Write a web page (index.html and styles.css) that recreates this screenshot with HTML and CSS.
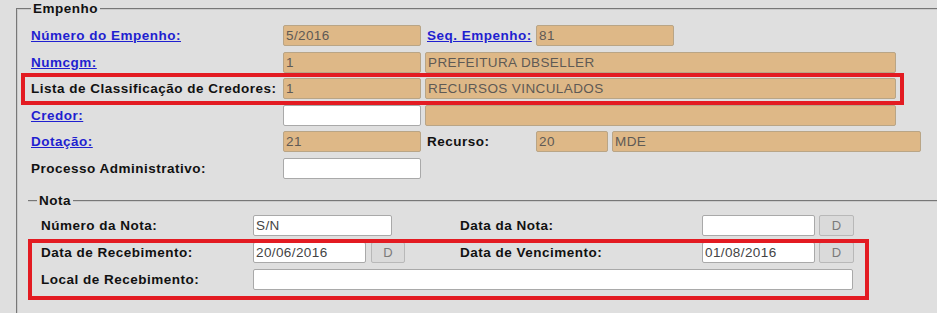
FILE: index.html
```html
<!DOCTYPE html>
<html lang="pt-BR">
<head>
    <meta charset="UTF-8">
    <title>Empenho</title>
    <link rel="stylesheet" href="styles.css">
</head>
<body>

<fieldset class="box">
    <legend>Empenho</legend>

    <div class="row">
        <span class="lbl lbl-main"><a href="#">Número do Empenho:</a></span>
        <input class="ro w-code" type="text" value="5/2016" readonly>
        <span class="lbl lbl-side"><a href="#">Seq. Empenho:</a></span>
        <input class="ro w-code" type="text" value="81" readonly>
    </div>
    <div class="row">
        <span class="lbl lbl-main"><a href="#">Numcgm:</a></span>
        <input class="ro w-code" type="text" value="1" readonly>
        <input class="ro w-desc" type="text" value="PREFEITURA DBSELLER" readonly>
    </div>
    <div class="row">
        <span class="lbl lbl-main">Lista de Classificação de Credores:</span>
        <input class="ro w-code" type="text" value="1" readonly>
        <input class="ro w-desc" type="text" value="RECURSOS VINCULADOS" readonly>
    </div>
    <div class="row">
        <span class="lbl lbl-main"><a href="#">Credor:</a></span>
        <input class="w-code" type="text" value="">
        <input class="ro w-desc" type="text" value="" readonly>
    </div>
    <div class="row">
        <span class="lbl lbl-main"><a href="#">Dotação:</a></span>
        <input class="ro w-code" type="text" value="21" readonly>
        <span class="lbl lbl-side">Recurso:</span>
        <input class="ro w-small" type="text" value="20" readonly>
        <input class="ro w-rec" type="text" value="MDE" readonly>
    </div>
    <div class="row">
        <span class="lbl lbl-main">Processo Administrativo:</span>
        <input class="w-code" type="text" value="">
    </div>

    <fieldset class="separator">
        <legend>Nota</legend>
        <div class="nota-grid">
            <span class="lbl">Número da Nota:</span>
            <div class="cell"><input class="w-nota" type="text" value="S/N"></div>
            <span class="lbl">Data da Nota:</span>
            <div class="cell">
                <input class="w-date" type="text" value="">
                <button class="btn-date" type="button">D</button>
            </div>

            <span class="lbl">Data de Recebimento:</span>
            <div class="cell">
                <input class="w-date" type="text" value="20/06/2016">
                <button class="btn-date btn-first" type="button">D</button>
            </div>
            <span class="lbl">Data de Vencimento:</span>
            <div class="cell">
                <input class="w-date" type="text" value="01/08/2016">
                <button class="btn-date" type="button">D</button>
            </div>

            <span class="lbl">Local de Recebimento:</span>
            <div class="cell span-3"><input class="w-local" type="text" value=""></div>
        </div>
    </fieldset>
</fieldset>

<!-- marcações em vermelho sobre o formulário -->
<div class="mark mark-lista"></div>
<div class="mark mark-receb"></div>

</body>
</html>
```

FILE: styles.css
```css
body {
    margin: 0;
    background-color: #dfdfdf;
    font-family: "Liberation Sans", Arial, sans-serif;
    font-size: 13.5px;
    letter-spacing: 0.5px;
    color: #111;
    position: relative;
    overflow: hidden;
    height: 313px;
}

.box {
    margin: 2px -20px 0 16px;
    padding: 9px 0 24px 13px;
    border: 2px groove #cbcbcb;
}

legend {
    padding: 0 2px;
    font-weight: bold;
    line-height: 14px;
    color: #111;
}

.row {
    display: flex;
    align-items: center;
    height: 21px;
    margin-bottom: 5.6px;
}

.lbl {
    font-weight: bold;
    white-space: nowrap;
}

.lbl a {
    color: #1f1fd0;
}

.lbl-main {
    width: 252px;
}

.lbl-side {
    width: 109px;
    margin-left: 6px;
}

input {
    box-sizing: border-box;
    height: 21px;
    margin: 0;
    padding: 0 2px;
    border: 1px solid #a9a9a9;
    border-radius: 2px;
    background-color: #fff;
    font-family: "Liberation Sans", Arial, sans-serif;
    font-size: 13.5px;
    letter-spacing: 0.4px;
    color: #444;
}

input.ro {
    background-color: #deb887;
    border-color: #b9a586;
    color: #5e5a55;
}

.w-code { width: 138px; }
.w-desc { width: 471px; margin-left: 4px; }
.w-small { width: 72px; }
.w-rec { width: 309px; margin-left: 4px; }

.separator {
    margin: 15.4px -20px 0 -3px;
    padding: 7px 0 0 9px;
    border: 0;
    border-top: 2px groove #cbcbcb;
}

.nota-grid {
    display: grid;
    grid-template-columns: 212px 207px 242px auto;
    row-gap: 6px;
    align-items: center;
    padding-left: 4px;
}

.cell {
    display: flex;
    align-items: center;
    height: 21px;
}

.span-3 {
    grid-column: 2 / 5;
}

.w-nota { width: 139px; }
.w-date { width: 113px; }
.w-local { width: 600px; }

.btn-date {
    box-sizing: border-box;
    width: 35px;
    height: 21px;
    margin-left: 4px;
    padding: 0;
    border: 1px solid #b8b8b8;
    border-radius: 2px;
    background-color: #dadada;
    font-family: "Liberation Sans", Arial, sans-serif;
    font-size: 13px;
    color: #7a7a7a;
}

.btn-first {
    width: 34px;
    margin-left: 5px;
}

.mark {
    position: absolute;
    box-sizing: border-box;
    border: 4px solid #e31b22;
}

.mark-lista {
    left: 21px;
    top: 73px;
    width: 883px;
    height: 32px;
}

.mark-receb {
    left: 28px;
    top: 239px;
    width: 841px;
    height: 61px;
}
```
